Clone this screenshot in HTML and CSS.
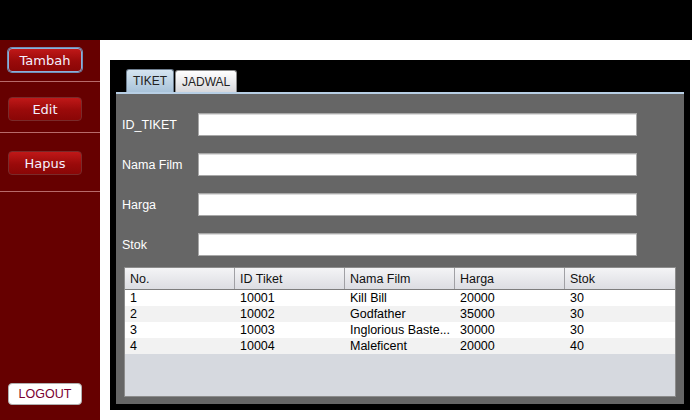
FILE: index.html
```html
<!DOCTYPE html>
<html>
<head>
<meta charset="utf-8">
<link rel="stylesheet" href="styles.css">
</head>
<body>
<div class="topbar"></div>
<div class="main">
  <aside class="sidebar">
    <div class="group g1"><button class="btn focused">Tambah</button></div>
    <div class="group g2"><button class="btn">Edit</button></div>
    <div class="group g3"><button class="btn">Hapus</button></div>
    <div class="spacer"></div>
    <button class="logout">LOGOUT</button>
  </aside>
  <section class="content">
    <div class="panel">
      <div class="tabs">
        <div class="tab active">TIKET</div>
        <div class="tab">JADWAL</div>
      </div>
      <div class="tabline"></div>
      <div class="tabbody">
        <div class="field"><label>ID_TIKET</label><div class="input"></div></div>
        <div class="field"><label>Nama Film</label><div class="input"></div></div>
        <div class="field"><label>Harga</label><div class="input"></div></div>
        <div class="field"><label>Stok</label><div class="input"></div></div>
        <div class="table">
          <div class="thead">
            <div class="th">No.</div><div class="th">ID Tiket</div><div class="th">Nama Film</div><div class="th">Harga</div><div class="th last">Stok</div>
          </div>
          <div class="tr"><div class="td">1</div><div class="td">10001</div><div class="td">Kill Bill</div><div class="td">20000</div><div class="td">30</div></div>
          <div class="tr alt"><div class="td">2</div><div class="td">10002</div><div class="td">Godfather</div><div class="td">35000</div><div class="td">30</div></div>
          <div class="tr"><div class="td">3</div><div class="td">10003</div><div class="td">Inglorious Baste...</div><div class="td">30000</div><div class="td">30</div></div>
          <div class="tr alt"><div class="td">4</div><div class="td">10004</div><div class="td">Maleficent</div><div class="td">20000</div><div class="td">40</div></div>
        </div>
      </div>
    </div>
  </section>
</div>
</body>
</html>
```
FILE: styles.css
```css
* { box-sizing: border-box; }
html, body { margin: 0; padding: 0; }
body {
  width: 692px;
  height: 420px;
  overflow: hidden;
  background: #ffffff;
  font-family: "Liberation Sans", Arial, sans-serif;
}
.topbar { height: 40px; background: #000; }
.main { display: flex; height: 380px; }
.sidebar {
  width: 100px;
  background: #660000;
  display: flex;
  flex-direction: column;
  align-items: stretch;
}
.group { border-bottom: 1px solid #b86a6a; padding-left: 8px; }
.g1 { height: 42px; padding-top: 8px; }
.g2 { height: 51px; padding-top: 15px; }
.g3 { height: 59px; padding-top: 18px; }
.spacer { flex: 1; }
.btn {
  display: block;
  width: 74px;
  height: 24px;
  margin: 0;
  padding: 0;
  border: 1px solid #7a2a2a;
  border-radius: 4px;
  background: linear-gradient(#c01818, #9a0a0a 55%, #8a0606);
  color: #f4f0ff;
  font-family: "DejaVu Sans", sans-serif;
  font-size: 13px;
  line-height: 23px;
  text-align: center;
}
.btn.focused {
  border-color: #8fb0d8;
  box-shadow: 0 0 0 1px #6f8fb8;
}
.logout {
  display: block;
  margin: 0 0 15px 8px;
  width: 74px;
  height: 22px;
  padding: 0;
  border: 1px solid #b0b0b0;
  border-radius: 4px;
  background: #fff;
  color: #7a0030;
  font-family: "Liberation Sans", Arial, sans-serif;
  font-size: 12.5px;
  line-height: 21px;
  text-align: center;
}
.content {
  flex: 1;
  background: #fff;
  padding: 20px 2px 10px 10px;
}
.panel {
  background: #000;
  height: 350px;
  padding: 9px 6px 6px 6px;
  display: flex;
  flex-direction: column;
}
.tabs { display: flex; padding-left: 10px; height: 23px; align-items: flex-end; }
.tab {
  height: 22px;
  padding: 0 6px;
  border: 1px solid #8a8a8a;
  border-bottom: none;
  border-radius: 3px 3px 0 0;
  background: linear-gradient(#ffffff, #d8d8dc);
  color: #222;
  font-size: 12px;
  line-height: 22px;
  margin-right: 1px;
}
.tab.active {
  height: 23px;
  width: 48px;
  text-align: center;
  padding: 0;
  border-color: #6f7f90;
  background: linear-gradient(#d5e4f0, #a9c3da);
  line-height: 23px;
}
.tabline { height: 3px; background: #b8cfe5; }
.tabbody {
  flex: 1;
  background: #666666;
  padding: 19px 0 7px 6px;
  display: flex;
  flex-direction: column;
}
.field { display: flex; align-items: center; height: 23px; margin-bottom: 17px; }
.field label {
  width: 76px;
  color: #ffffff;
  font-size: 12.5px;
  padding-top: 1px;
}
.input {
  width: 439px;
  height: 23px;
  background: #fff;
  border: 1px solid #a8a8a8;
  box-shadow: inset 0 1px 0 #dcdcdc;
}
.field:nth-child(4) { margin-bottom: 11px; }
.table {
  margin-left: 2px;
  width: 552px;
  height: 130px;
  border: 1px solid #8c8c8c;
  background: #d6d9df;
}
.thead {
  display: flex;
  height: 22px;
  border-bottom: 1px solid #7d7d7d;
  background: linear-gradient(#f4f4f6, #dcdde2);
}
.th {
  width: 110px;
  padding-left: 5px;
  border-right: 1px solid #a0a0a4;
  font-size: 12.5px;
  line-height: 22px;
  color: #111;
}
.th.last { flex: 1; border-right: none; }
.tr { display: flex; height: 16px; background: #fff; }
.tr.alt { background: #f2f2f2; }
.td {
  width: 110px;
  padding-left: 5px;
  font-size: 12.5px;
  line-height: 17px;
  color: #000;
  white-space: nowrap;
}
```
